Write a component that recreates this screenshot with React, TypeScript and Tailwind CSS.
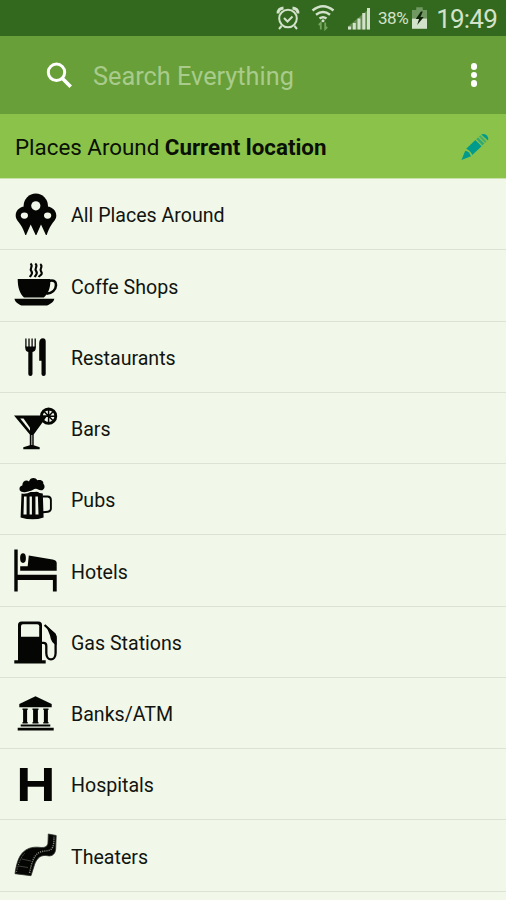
import type { ReactNode } from 'react'

const INK = '#050604'
const PAPER = '#f1f8e9'

// All list icons share a 42x42 box
const ICONS: Record<string, ReactNode> = {
  pins: (
    <>
      <circle cx="20.800" cy="11.800" r="12.200" />
      <path d="M9.500 12.500C4 13 .7 17 .7 21.500c0 4 2.800 6 5 9.500 2 3 3.300 6.500 4.600 9.900h.8L15.700 30.500 20.600 40.900h.8L26 30.500 30.900 40.900h.8c1.300-3.400 2.600-6.900 4.600-9.900 2.200-3.500 5-5.500 5-9.500 0-4.500-3.500-8.500-9-9z" />
      <circle cx="20.800" cy="11.800" r="4.600" fill={PAPER} />
      <ellipse cx="9.400" cy="21.600" rx="3.600" ry="3.100" fill={PAPER} />
      <ellipse cx="32.600" cy="21.600" rx="3.600" ry="3.100" fill={PAPER} />
    </>
  ),
  coffee: (
    <>
      <path d="M2.700 14h32.600v2.500c0 7-2.300 12.500-6.500 15.900H9C4.800 29 2.700 22.500 2.700 14z" />
      <path d="M34 16c4.500-1.500 7.200.5 7 4.200-.2 4.500-4 8-9.500 8.600" fill="none" stroke={INK} strokeWidth="2.600" />
      <path d="M-.5 33.700h39.800c-.5 3.500-3.800 5-7.300 6.800H6.500C3 38.700 0 37-.5 33.700z" />
      <path
        d="M15.500-1.500c3.500 3-1.500 4.500.8 7.500s-.5 4-1.500 6M20.300-1.500c3.500 3-1.500 4.500.8 7.500s-.5 4-1.500 6M25.300-1c3.500 3-1.500 4.500.8 7.500s-1.500 4-2.500 5.500"
        fill="none" stroke={INK} strokeWidth="2.100"
      />
    </>
  ),
  cutlery: (
    <>
      <path d="M10.300 9.500h10.500v1.500c0 2.300-1.300 3.500-3.300 4v22a2.100 2.100 0 0 1-4.200 0V15c-2-.5-3-1.700-3-4z" />
      <path d="M10.900 1.500v9M14 1.500v9M17.100 1.500v9M20.200 1.500v9" fill="none" stroke={INK} strokeWidth="1.300" />
      <path d="M24.200 23.800V6c0-3 1.500-4.800 3.700-4.800 1.800 0 2.800 1.200 2.800 3V37a2 2 0 0 1-4.200 0V23.800z" />
    </>
  ),
  cocktail: (
    <>
      <circle cx="33.600" cy="8.200" r="7.200" fill="none" stroke={INK} strokeWidth="2.800" />
      <path d="M33.600 2v12.500M27.500 8.200h12.500M29.300 3.800l8.600 8.800M38 3.800l-4.400 4.400" stroke={INK} strokeWidth="1.500" />
      <path d="M-1 7.400h33.500L18.700 26.500v10.800l6 2v2H8.300v-2l6.500-2V26.500z" />
      <path d="M5.200 10.500h3.300l6.500 9.200v3z" fill={PAPER} />
      <path d="M16.700 27v10" stroke="#8b9086" strokeWidth="1.500" />
    </>
  ),
  beer: (
    <>
      <path d="M8 13c-4.500 0-4.600-5.800-.7-6.500C7.300 2 11.500.3 14 2.500c1-4.300 6.800-4.600 8.200-1.200 3.600-1.300 6.700.7 6.100 3.400 2.500 2.300 1 6.500-2 6.600-2.600.2-3.600-1.500-5.500-1.500-2.300 0-3.200 2.400-6.200 2.200C12 13 10.500 13.500 8 13z" />
      <path d="M6.500 14.500q5 1 9-1.500h4q3-.7 5 1l3.300.5.800 24q-10.500 3.700-23 0z" />
      <path d="M9 17.500h2.600v18H8.500zM14.600 17.500h2.300v18h-2.300zM20.400 17.500h2.500l.6 18h-3z" fill={PAPER} />
      <path d="M27.500 17.500h5q3.400.2 3.400 3.500v8.500q0 2.800-3 3.200l-5 .6" fill="none" stroke={INK} strokeWidth="1.900" />
    </>
  ),
  bed: (
    <>
      <path d="M-.7-.5h3.400v25.300h39v16.600h-3.800V30h-35.200v11.400h-3.400z" />
      <ellipse cx="8" cy="8.100" rx="2.900" ry="4.900" />
      <path d="M5.200 16.300h7.500L13.800 5.500 37.500 9.500q4.200.7 4.200 3.500v7.800H5.200z" />
    </>
  ),
  gas: (
    <>
      <path d="M3 38.200V3Q3-.6 6.500-.6h17Q27-.6 27 3v35.200h3.700v3.200H-.7v-3.200z" />
      <path d="M6 4.200q0-1.900 2-1.900h14.200q2 0 2 1.900v10.600H6z" fill={PAPER} />
      <path d="M27 20.800h1.500q2.800 0 2.800 3V31c0 8.500 9.300 8.500 9.300 0V15.500q0-2-1.500-3.500l-9.500-9" fill="none" stroke={INK} strokeWidth="2.300" />
      <path d="M31 3.500l9.500 8 1 3v8.500q-5.500-2-6.500-9.500z" />
    </>
  ),
  bank: (
    <>
      <path d="M20.500 3.300L36.700 11v3.200H4.300V11z" />
      <path d="M7.500 15.500h5.200v1.500h-.6v12h.6v1.500H7.500V29h.6V17h-.6zM17.500 15.500h6v1.500h-.6v12h.6v1.500h-6V29h.6V17h-.6zM28.300 15.500h5.200v1.500h-.6v12h.6v1.500h-5.200V29h.6V17h-.6z" />
      <path d="M5.700 31.400h29.600v2.200H5.700zM2.700 34.800h36v2.800h-36z" />
    </>
  ),
  hospital: (
    <text
      x="0" y="0"
      transform="translate(20.900 36.600) scale(1.120 1)"
      textAnchor="middle"
      fontFamily="Liberation Sans, sans-serif"
      fontWeight="700"
      fontSize="48.500"
    >
      H
    </text>
  ),
  film: (
    <>
      <path
        d="M0 38.700C1.500 28 4 21 8.300 17c5-4.500 10.500-5.300 16.700-4.600 5 .5 8-.8 8-5.400l.3-8 7.900 1.500-.5 13c-.3 5.500-3.500 8.200-8.200 7.200-6.500-1.200-10.500 2-13 9L16 40.700z"
        stroke="#2f322c" strokeWidth=".8"
      />
      <path
        d="M14.500 38c2-9 3.500-15.500 8-19.500 4-3 8-2 12-3.300 3-1 4.500-4 4.500-13.500"
        fill="none" stroke="#82877d" strokeWidth="1.400" strokeDasharray="1.200 1"
      />
      <path d="M1.500 37C3.500 28 6 22 9.500 18.500" fill="none" stroke="#82877d" strokeWidth=".9" strokeDasharray="1 1.400" />
      <path d="M3.500 31l9.500 1.500M6.500 24l9.500 2" stroke="#565a52" strokeWidth=".7" />
    </>
  ),
}

const PLACES = [
  { icon: 'pins', label: 'All Places Around' },
  { icon: 'coffee', label: 'Coffe Shops' },
  { icon: 'cutlery', label: 'Restaurants' },
  { icon: 'cocktail', label: 'Bars' },
  { icon: 'beer', label: 'Pubs' },
  { icon: 'bed', label: 'Hotels' },
  { icon: 'gas', label: 'Gas Stations' },
  { icon: 'bank', label: 'Banks/ATM' },
  { icon: 'hospital', label: 'Hospitals' },
  { icon: 'film', label: 'Theaters' },
]

function StatusBar() {
  return (
    <div className="flex h-9 shrink-0 items-center justify-end bg-[#33691e] pr-[9px] text-[#d3e2ca]">
      <svg className="mr-[11px]" width="24" height="24" viewBox="0 0 24 24" fill="none" stroke="currentColor" strokeWidth="2">
        <circle cx="12" cy="12.500" r="8.800" />
        <path d="M8 12l3.500 3.500 5-5M5.500 20l-2.500 3M18.500 20l2.500 3" />
        <path d="M2 7.500Q2 2.500 7.500 2M22 7.500Q22 2.500 16.500 2" strokeWidth="2.800" />
      </svg>
      <svg className="mr-[12px]" width="24" height="26" viewBox="0 0 24 26" fill="none" stroke="currentColor" strokeWidth="2.400">
        <path d="M1.500 5.500q10.500-8.500 21 0M5 9.700q7-5.500 14 0M8.500 13.500q3.500-2.500 7 0" />
        <circle cx="12" cy="15.800" r="1.500" fill="currentColor" stroke="none" />
        <path d="M9.800 24.500v-6.500l-2 2M14.200 17.500v6.500l2-2" stroke="#75a45e" strokeWidth="1.800" />
      </svg>
      <svg className="mr-[7px]" width="24" height="24" viewBox="0 0 24 24" fill="currentColor">
        <path d="M1 20.500h3v3H1zM5.800 17h3v6.500h-3zM10.500 12.500h3v11h-3zM15.300 7h3v16.500h-3zM20 2h3v21.500h-3z" />
        <path d="M1 23.500V20.500L23 2v21.500z" opacity=".3" />
      </svg>
      <span className="mt-px mr-[4px] text-[17px] leading-none tracking-[-0.4px]">38%</span>
      <svg className="mr-[9px]" width="15" height="22" viewBox="0 0 16 23">
        <path d="M4.500 0h7v3H16v9H0V3h4.500z" fill="#6f9961" />
        <path d="M0 12h16v11H0z" fill="#d3e2ca" />
        <path d="M9.500 4.500L4 12.500h3.500L5.500 19l7-8.500H9l2.500-6z" fill="#10230a" />
      </svg>
      <span className="mt-[2px] text-[26px] leading-none tracking-[-0.8px]">19:49</span>
    </div>
  )
}

function SearchBar() {
  return (
    <div className="flex h-[78px] shrink-0 items-center bg-[#689f38] pr-[29px] pl-[46px]">
      <svg width="27" height="27" viewBox="0 0 27 27" fill="none" stroke="#fff" strokeWidth="3">
        <circle cx="10.500" cy="10.300" r="8.200" />
        <path d="M16 16l8.700 8.700" strokeWidth="3.600" />
      </svg>
      <span className="mt-[3px] ml-[20px] text-[25.300px] leading-none text-[#a9cb8c]">Search Everything</span>
      <div className="ml-auto flex flex-col gap-[2px]">
        <span className="size-[6.500px] rounded-full bg-white" />
        <span className="size-[6.500px] rounded-full bg-white" />
        <span className="size-[6.500px] rounded-full bg-white" />
      </div>
    </div>
  )
}

function LocationBar() {
  return (
    <div className="flex h-[64px] shrink-0 items-center justify-between bg-[#8bc34a] pr-[17px] pl-[15px] text-[22.350px] leading-none text-[#0a1004]">
      <span className="mt-[2px] whitespace-pre">
        Places Around <b className="font-bold">Current location</b>
      </span>
      <svg className="mt-[2px]" width="28" height="28" viewBox="0 0 28 28" fill="#009b8c">
        <path d="M.5 27l3.700-9.300q3.800.3 5.800 5.500z" />
        <path d="M5.200 15.700L14.300 7l6.300 6.300-9.300 8.700q-1.500-4-6.100-6.300z" />
        <path d="M15.200 6.100l1.900-1.700 6.200 6.200-1.900 1.800z" opacity=".65" />
        <path d="M17.900 3.600l1.500-1.300 6.200 6.200-1.500 1.400z" opacity=".5" />
        <path d="M20.200 1.500q2.800-1.500 5.300.8t1.500 5.300z" />
      </svg>
    </div>
  )
}

export default function App() {
  return (
    <div className="flex h-[900px] w-[506px] flex-col overflow-hidden bg-[#f1f8e9] font-['Roboto',sans-serif]">
      <StatusBar />
      <SearchBar />
      <LocationBar />
      <ul className="border-t border-[#c9e2aa]">
        {PLACES.map(place => (
          <li key={place.label} className="flex h-[71.250px] items-center border-b border-[#dce3d5] pt-[2px] pl-[15px]">
            <svg className="overflow-visible" width="42" height="42" viewBox="0 0 42 42" fill={INK}>
              {ICONS[place.icon]}
            </svg>
            <span className="mt-[2px] ml-[14px] text-[19.600px] leading-none text-[#11140f]">{place.label}</span>
          </li>
        ))}
      </ul>
    </div>
  )
}
